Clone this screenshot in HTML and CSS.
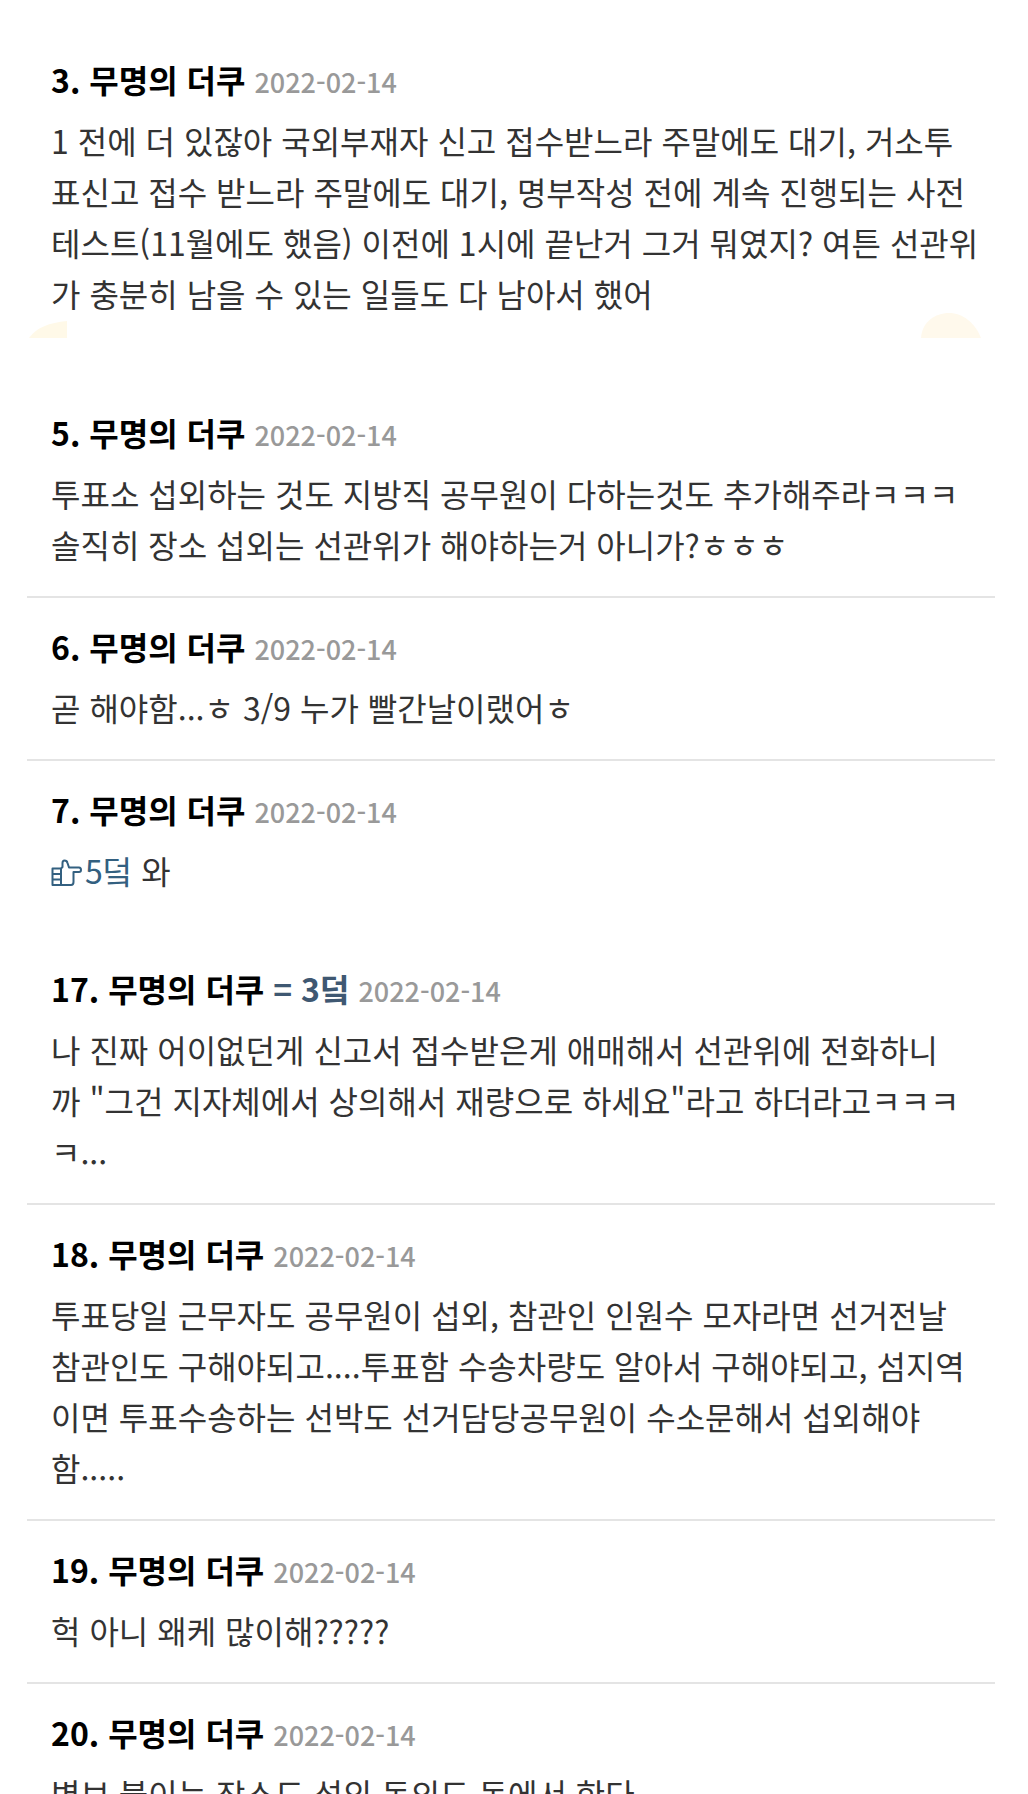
FILE: index.html
```html
<!DOCTYPE html>
<html lang="ko">
<head>
    <meta charset="UTF-8">
    <meta name="viewport" content="width=device-width, initial-scale=1.0">
    <title>댓글</title>
    <link rel="stylesheet" href="styles.css">
</head>
<body>
    <main class="comments">
        <section class="group group-first">
            <article class="comment">
                <h2>3. 무명의 더쿠 <time datetime="2022-02-14">2022-02-14</time></h2>
                <p>1 전에 더 있잖아 국외부재자 신고 접수받느라 주말에도 대기, 거소투<br>표신고 접수 받느라 주말에도 대기, 명부작성 전에 계속 진행되는 사전<br>테스트(11월에도 했음) 이전에 1시에 끝난거 그거 뭐였지? 여튼 선관위<br>가 충분히 남을 수 있는 일들도 다 남아서 했어</p>
            </article>
            <div class="decor">
                <svg width="40" height="18" viewBox="0 0 40 18" aria-hidden="true"><path d="M2 18C10 7 22 3 40 1V18Z" fill="#fff9e8"/></svg>
                <svg width="60" height="26" viewBox="0 0 60 26" aria-hidden="true"><path d="M0 26C1 10 14 1 28 1C42 1 54 11 60 26Z" fill="#fff9ec"/></svg>
            </div>
        </section>

        <section class="group">
            <article class="comment">
                <h2>5. 무명의 더쿠 <time datetime="2022-02-14">2022-02-14</time></h2>
                <p>투표소 섭외하는 것도 지방직 공무원이 다하는것도 추가해주라ㅋㅋㅋ<br>솔직히 장소 섭외는 선관위가 해야하는거 아니가?ㅎㅎㅎ</p>
            </article>
            <article class="comment">
                <h2>6. 무명의 더쿠 <time datetime="2022-02-14">2022-02-14</time></h2>
                <p>곧 해야함...ㅎ 3/9 누가 빨간날이랬어ㅎ</p>
            </article>
            <article class="comment">
                <h2>7. 무명의 더쿠 <time datetime="2022-02-14">2022-02-14</time></h2>
                <p><a class="reply" href="#"><svg class="hand" viewBox="0 0 31 28" aria-hidden="true"><path d="M10 9.500H1.500V26H10M1.500 15H10M1.500 20.500H10M10 9.500V26H20Q22.500 26 22.500 23V13H28Q30 13 30 11Q30 8.500 28 8.500H18L16.500 4Q16 1.500 13.500 1.500Q11.500 1.500 11.500 4V8Z"/></svg>5덬</a> 와</p>
            </article>
        </section>

        <section class="group">
            <article class="comment">
                <h2>17. 무명의 더쿠 <span class="same">= 3덬</span> <time datetime="2022-02-14">2022-02-14</time></h2>
                <p>나 진짜 어이없던게 신고서 접수받은게 애매해서 선관위에 전화하니<br>까 "그건 지자체에서 상의해서 재량으로 하세요"라고 하더라고ㅋㅋㅋ<br>ㅋ...</p>
            </article>
            <article class="comment">
                <h2>18. 무명의 더쿠 <time datetime="2022-02-14">2022-02-14</time></h2>
                <p>투표당일 근무자도 공무원이 섭외, 참관인 인원수 모자라면 선거전날<br>참관인도 구해야되고....투표함 수송차량도 알아서 구해야되고, 섬지역<br>이면 투표수송하는 선박도 선거담당공무원이 수소문해서 섭외해야<br>함.....</p>
            </article>
            <article class="comment">
                <h2>19. 무명의 더쿠 <time datetime="2022-02-14">2022-02-14</time></h2>
                <p>헉 아니 왜케 많이해?????</p>
            </article>
            <article class="comment">
                <h2>20. 무명의 더쿠 <time datetime="2022-02-14">2022-02-14</time></h2>
                <p>벽보 붙이는 장소도 섭외 동의도 동에서 한다</p>
            </article>
        </section>
    </main>
</body>
</html>
```
FILE: styles.css
```css
* { box-sizing: border-box; }

body {
    font-family: "Noto Sans CJK KR", sans-serif;
    font-size: 32px;
    line-height: 51px;
    color: #333;
    background: #fff;
    margin: 0;
}

.comments {
    height: 100vh;
    overflow: hidden;
    padding: 31px 33px 0 27px;
}

.group { margin-bottom: 18px; }

.group-first { margin-bottom: 46px; }

.comment {
    padding: 23px 0 26px 24px;
    border-bottom: 2px solid #e4e4e4;
}

.comment:last-of-type { border-bottom: none; }

.group-first .comment { padding-bottom: 0; }

h2 {
    font-size: 32px;
    font-weight: 700;
    color: #000;
    margin: 0 0 10px;
}

p {
    margin: 0;
    white-space: nowrap;
}

time {
    font-size: 27px;
    font-weight: 500;
    line-height: 1;
    color: #999;
}

.same { color: #3f5872; }

.reply {
    color: #336080;
    text-decoration: none;
}

.hand {
    width: 31px;
    height: 28px;
    margin-right: 3px;
    vertical-align: -3px;
    fill: none;
    stroke: currentColor;
    stroke-width: 2;
    stroke-linejoin: round;
}

/* pale shapes along the bottom edge of the first block */
.decor {
    display: flex;
    justify-content: space-between;
    align-items: flex-end;
    height: 19px;
    padding-right: 14px;
}
```
